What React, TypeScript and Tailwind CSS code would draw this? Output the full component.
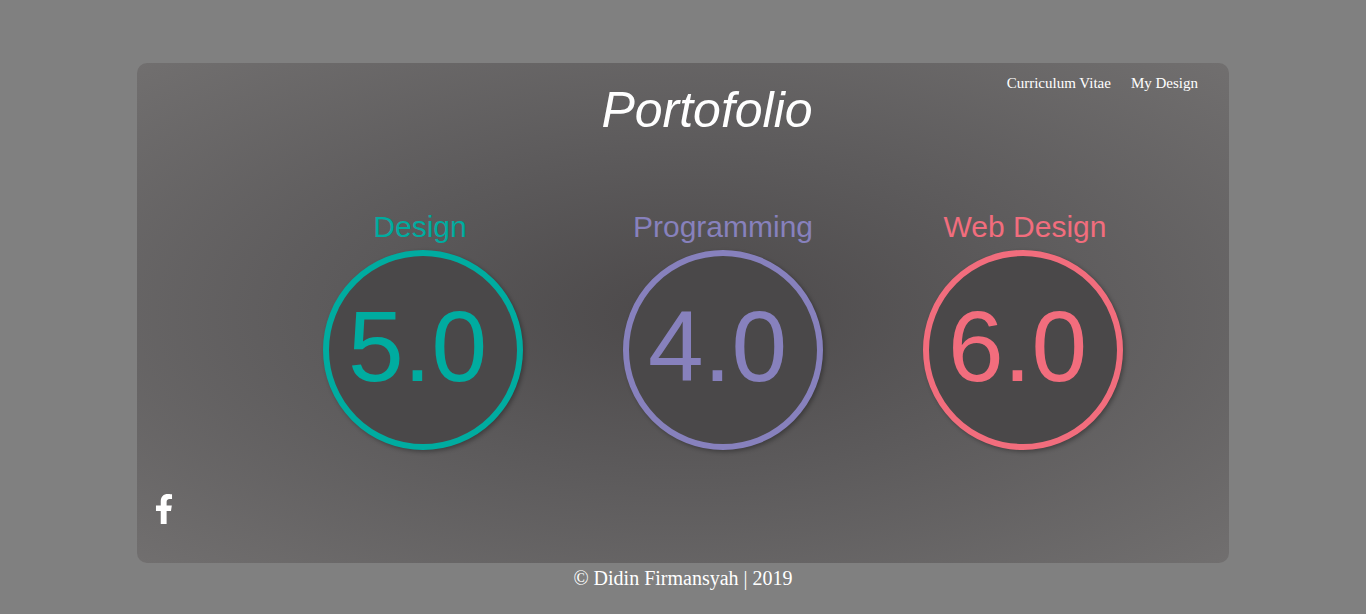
import { FaFacebookF } from "react-icons/fa";

const scores = [
    { label: "Design", value: "5.0", ring: "border-[#00aca0]", text: "text-[#00aca0]", labelShift: "-translate-x-[3px]" },
    { label: "Programming", value: "4.0", ring: "border-[#8781bd]", text: "text-[#8781bd]", labelShift: "translate-x-0" },
    { label: "Web Design", value: "6.0", ring: "border-[#f26d7d]", text: "text-[#f26d7d]", labelShift: "translate-x-[2px]" },
];

const App = () => {
    return (
        <div className="w-full h-[614px] bg-[#808080] flex flex-col items-center pt-[63px] overflow-hidden font-['Liberation_Serif',serif]">
            <main className="relative w-[1092px] h-[500px] rounded-[10px] flex flex-col bg-[radial-gradient(ellipse_at_center,#4c494a_0%,#5c5a5b_45%,#716f6f_100%)]">
                <nav className="absolute top-[9px] right-[31px] flex gap-5 text-[15px] text-white">
                    <a href="#">Curriculum Vitae</a>
                    <a href="#">My Design</a>
                </nav>

                <h1 className="pl-[48px] pt-[19px] text-center text-[50px] leading-[57px] italic text-white font-['Liberation_Sans',sans-serif]">
                    Portofolio
                </h1>

                <section className="mt-[71px] pl-[186px] flex gap-[100px] font-['Liberation_Sans',sans-serif]">
                    {scores.map((score) => (
                        <div key={score.label} className="w-[200px] flex flex-col items-center">
                            <h2 className={`text-[30px] leading-[34px] whitespace-nowrap ${score.text} ${score.labelShift}`}>
                                {score.label}
                            </h2>
                            <div className={`mt-[6px] w-[200px] h-[200px] rounded-full border-[6px] bg-[#4a4849] shadow-[2px_2px_4px_rgba(0,0,0,0.3)] flex items-center justify-center ${score.ring}`}>
                                <span className={`-ml-[11px] -mt-[9px] text-[100px] leading-none ${score.text}`}>{score.value}</span>
                            </div>
                        </div>
                    ))}
                </section>

                <a href="#" className="mt-auto mb-[39px] ml-[12px] text-white text-[30px]">
                    <FaFacebookF />
                </a>
            </main>
            <footer className="text-[20px] leading-[30px] text-white">© Didin Firmansyah | 2019</footer>
        </div>
    );
};

export default App;
